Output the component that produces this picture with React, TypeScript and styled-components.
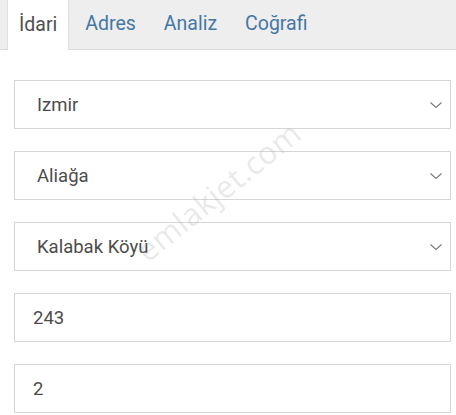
import React from "react";
import styled, { createGlobalStyle } from "styled-components";

const Global = createGlobalStyle`
  html, body { margin: 0; padding: 0; background: #ffffff; }
  body { font-family: Roboto, "Noto Sans", "Liberation Sans", sans-serif; }
  * { box-sizing: border-box; }
`;

const Page = styled.div`
  position: relative;
  width: 456px;
  height: 415px;
  overflow: hidden;
  background: #ffffff;
`;

const TabBar = styled.div`
  display: flex;
  align-items: stretch;
  height: 50px;
  padding-left: 7px;
  background: #eeeeee;
  border-bottom: 1px solid #dcdcdc;
`;

const Tab = styled.div<{ $active?: boolean }>`
  display: flex;
  align-items: center;
  padding: 0 ${(p) => (p.$active ? "11px" : "13px")};
  margin-right: ${(p) => (p.$active ? "2px" : "0")};
  font-size: 19.5px;
  color: ${(p) => (p.$active ? "#505050" : "#4577a5")};
  background: ${(p) => (p.$active ? "#ffffff" : "transparent")};
  border-left: 1px solid ${(p) => (p.$active ? "#dedede" : "transparent")};
  border-right: 1px solid ${(p) => (p.$active ? "#dedede" : "transparent")};
  margin-bottom: ${(p) => (p.$active ? "-1px" : "0")};
  padding-bottom: 2px;
`;

const Form = styled.div`
  display: flex;
  flex-direction: column;
  gap: 22px;
  padding: 30px 5px 0 14px;
`;

const Field = styled.div<{ $select?: boolean }>`
  display: flex;
  align-items: center;
  justify-content: space-between;
  height: 49px;
  padding: 0 8px 0 ${(p) => (p.$select ? "22px" : "18px")};
  border: 1.5px solid #d6d6d6;
  background: #ffffff;
  font-size: 18.5px;
  color: #4c4c4c;
`;

const Chevron = styled.svg`
  width: 12px;
  height: 8px;
  flex: none;
  margin-top: 1px;
`;

const Watermark = styled.div`
  position: absolute;
  left: 118px;
  top: 170px;
  font-family: "Open Sans", "Noto Sans", sans-serif;
  font-size: 31px;
  color: rgba(180, 180, 180, 0.28);
  transform: rotate(-39deg);
  transform-origin: center;
  pointer-events: none;
  white-space: nowrap;
  letter-spacing: 0.5px;
`;

const ChevronIcon = () => (
  <Chevron viewBox="0 0 12 8">
    <path d="M0.5 1.5 L6 6.5 L11.5 1.5" fill="none" stroke="#7a7a7a" strokeWidth="1.1" />
  </Chevron>
);

const fields: { value: string; select: boolean }[] = [
  { value: "Izmir", select: true },
  { value: "Aliağa", select: true },
  { value: "Kalabak Köyü", select: true },
  { value: "243", select: false },
  { value: "2", select: false },
];

export default function App() {
  return (
    <>
      <Global />
      <Page>
        <TabBar>
          <Tab $active>İdari</Tab>
          <Tab>Adres</Tab>
          <Tab>Analiz</Tab>
          <Tab>Coğrafi</Tab>
        </TabBar>
        <Form>
          {fields.map((f) => (
            <Field key={f.value} $select={f.select}>
              <span>{f.value}</span>
              {f.select && <ChevronIcon />}
            </Field>
          ))}
        </Form>
        <Watermark>emlakjet.com</Watermark>
      </Page>
    </>
  );
}
